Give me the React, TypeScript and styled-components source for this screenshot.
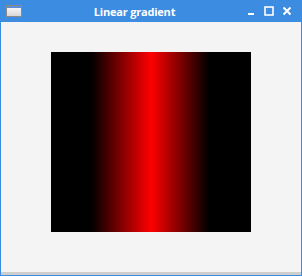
import styled, { createGlobalStyle } from "styled-components";

const GlobalStyle = createGlobalStyle`
    html, body {
        margin: 0;
        padding: 0;
        background: #f4f4f4;
    }
`;

const Frame = styled.div`
    width: 302px;
    height: 276px;
    box-sizing: border-box;
    display: flex;
    flex-direction: column;
    background: #3c8ce2;
    padding: 0 1px 1px;
    font-family: "Open Sans", "DejaVu Sans", sans-serif;
`;

const TitleBar = styled.div`
    height: 22px;
    display: flex;
    align-items: center;
    padding: 0 5px;
`;

const Title = styled.span`
    flex: 1;
    text-align: center;
    color: #ffffff;
    font-size: 11px;
    font-weight: 700;
    letter-spacing: -0.2px;
`;

const Controls = styled.div`
    display: flex;
    align-items: center;
    gap: 8px;
    margin-right: 4px;
`;

const Body = styled.div`
    flex: 1;
    background: #f4f4f4;
    display: flex;
    flex-direction: column;
`;

const Canvas = styled.div`
    flex: 1;
    padding: 30px 0 0 50px;
`;

const Gradient = styled.div`
    width: 200px;
    height: 180px;
    background: linear-gradient(
        to right,
        #000000 0px,
        #000000 40px,
        #ff0000 100px,
        #000000 158px,
        #000000 200px
    );
`;

const StatusStrip = styled.div`
    height: 3px;
    background: #cfcfcf;
`;

function WindowIcon() {
    return (
        <svg width="16" height="12" viewBox="0 0 16 12">
            <defs>
                <linearGradient id="wi" x1="0" y1="0" x2="0" y2="1">
                    <stop offset="0" stopColor="#ffffff" />
                    <stop offset="1" stopColor="#d6d6d6" />
                </linearGradient>
            </defs>
            <rect x="0.5" y="0.5" width="15" height="11" fill="url(#wi)" stroke="#8a8a8a" />
            <rect x="1" y="1" width="14" height="2" fill="#5a8fd8" />
        </svg>
    );
}

function App() {
    return (
        <>
            <GlobalStyle />
            <Frame>
                <TitleBar>
                    <WindowIcon />
                    <Title>Linear gradient</Title>
                    <Controls>
                        <svg width="9" height="9" viewBox="0 0 9 9">
                            <rect x="1" y="6" width="6" height="2" fill="#fff" />
                        </svg>
                        <svg width="10" height="10" viewBox="0 0 10 10">
                            <rect x="1" y="1" width="8" height="8" fill="none" stroke="#fff" strokeWidth="1.6" />
                        </svg>
                        <svg width="10" height="10" viewBox="0 0 10 10">
                            <path d="M1.5 1.5 L8.5 8.5 M8.5 1.5 L1.5 8.5" stroke="#fff" strokeWidth="2" />
                        </svg>
                    </Controls>
                </TitleBar>
                <Body>
                    <Canvas>
                        <Gradient />
                    </Canvas>
                    <StatusStrip />
                </Body>
            </Frame>
        </>
    );
}

export default App;
